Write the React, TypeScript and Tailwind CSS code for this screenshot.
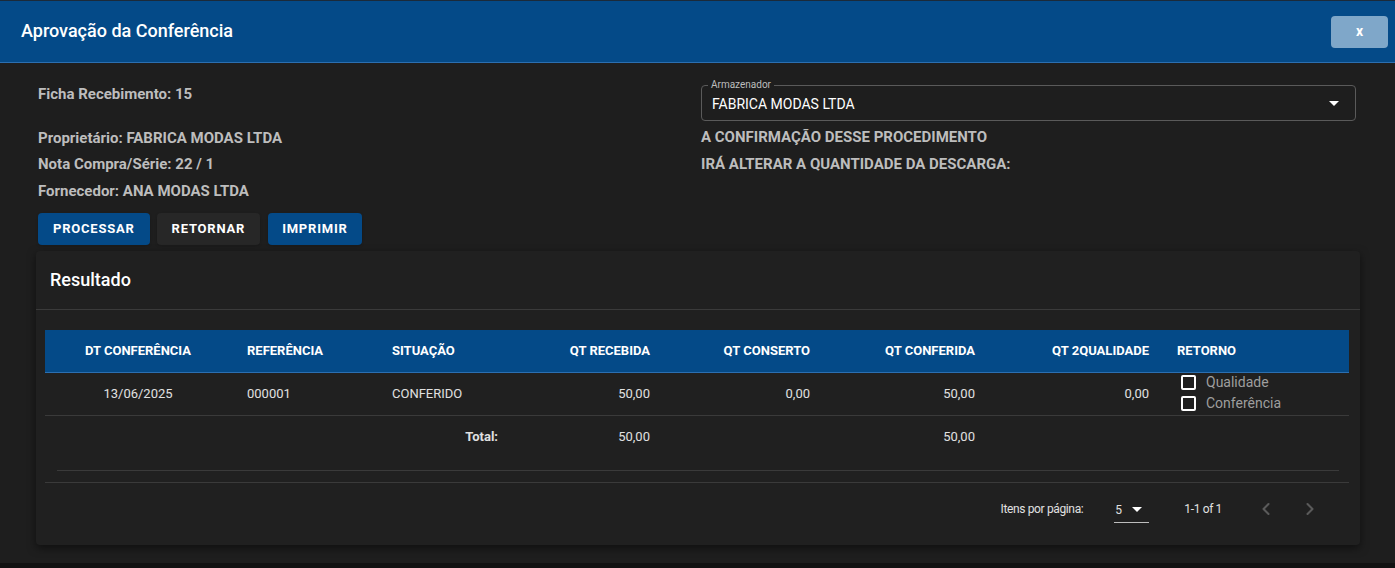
import { ChevronLeft, ChevronRight } from 'lucide-react';

const font = { fontFamily: 'Roboto, "Noto Sans", sans-serif' };

function Caret() {
    return (
        <svg width="10" height="5" viewBox="0 0 10 5" className="fill-white">
            <path d="M0 0 L10 0 L5 5 Z" />
        </svg>
    );
}

function Check({ label }: { label: string }) {
    return (
        <div className="flex items-center h-[21px]">
            <span className="w-[15px] h-[15px] border-2 border-white rounded-[2px] ml-[4px]" />
            <span className="ml-[10px] text-[14px] text-[#9e9e9e]">{label}</span>
        </div>
    );
}

export default function App() {
    return (
        <div className="w-[1395px] h-[568px] bg-[#121212] overflow-hidden" style={font}>
            <div className="h-[1px] bg-[#1b2a3a]" />
            <div className="h-[562px] bg-[#1e1e1e] flex flex-col">
                {/* Header */}
                <div className="h-[62px] bg-[#044a88] border-b border-[#2c6fb0] flex items-center justify-between pl-[21px] pr-[7px] shrink-0">
                    <h1 className="text-white text-[18px] font-medium mb-[2px]">Aprovação da Conferência</h1>
                    <button className="w-[57px] h-[32px] rounded bg-[#7fa7c9] text-white font-bold text-[14px]">x</button>
                </div>

                {/* Info */}
                <div className="flex px-[38px] pt-[21px]">
                    <div className="w-[663px] text-[15px] font-bold text-[#bdbdbd]">
                        <div className="h-[20px] leading-[20px]">Ficha Recebimento: 15</div>
                        <div className="h-[26px] mt-[21px] leading-[26px]">Proprietário: FABRICA MODAS LTDA</div>
                        <div className="h-[27px] leading-[27px]">Nota Compra/Série: 22 / 1</div>
                        <div className="h-[26px] leading-[26px]">Fornecedor: ANA MODAS LTDA</div>
                        <div className="flex mt-[9px]">
                            <button className="h-[32px] px-[15px] rounded bg-[#044a88] text-white text-[13px] font-bold tracking-[0.06em] shadow">PROCESSAR</button>
                            <button className="h-[32px] px-[15px] ml-[7px] rounded bg-[#272727] text-white text-[13px] font-bold tracking-[0.06em] shadow">RETORNAR</button>
                            <button className="h-[32px] px-[14px] ml-[8px] rounded bg-[#044a88] text-white text-[13px] font-bold tracking-[0.06em] shadow">IMPRIMIR</button>
                        </div>
                    </div>
                    <div className="flex-1 pr-[1px]">
                        <div className="relative h-[36px] mt-[1px] border border-[#5a5a5a] rounded flex items-center justify-between pl-[10px] pr-[16px]">
                            <span className="absolute -top-[6px] left-[6px] px-[3px] bg-[#1e1e1e] text-[10px] leading-[10px] text-[#bdbdbd]">Armazenador</span>
                            <span className="text-white text-[14px] mt-[2px]">FABRICA MODAS LTDA</span>
                            <Caret />
                        </div>
                        <div className="text-[15px] font-bold text-[#bdbdbd]">
                            <div className="h-[32px] leading-[32px]">A CONFIRMAÇÃO DESSE PROCEDIMENTO</div>
                            <div className="h-[22px] leading-[22px]">IRÁ ALTERAR A QUANTIDADE DA DESCARGA:</div>
                        </div>
                    </div>
                </div>

                {/* Result card */}
                <div className="ml-[36px] w-[1324px] mt-[6px] h-[294px] bg-[#202020] rounded shadow-[0_3px_8px_rgba(0,0,0,0.5)] flex flex-col">
                    <div className="h-[59px] border-b border-[#3a3a3a] flex items-center pl-[14px]">
                        <h2 className="text-white text-[18px] font-medium mb-[2px]">Resultado</h2>
                    </div>
                    <div className="px-[9px] pt-[20px]">
                        <table className="w-[1304px] table-fixed border-collapse text-[13px]">
                            <colgroup>
                                <col className="w-[186px]" />
                                <col className="w-[145px]" />
                                <col className="w-[138px]" />
                                <col className="w-[152px]" />
                                <col className="w-[160px]" />
                                <col className="w-[165px]" />
                                <col className="w-[174px]" />
                                <col className="w-[184px]" />
                            </colgroup>
                            <thead>
                                <tr className="h-[42px] bg-[#044a88] text-white font-bold text-[13px] border-b border-[#2c6fb0]">
                                    <th className="text-center px-[16px]">DT CONFERÊNCIA</th>
                                    <th className="text-left px-[16px]">REFERÊNCIA</th>
                                    <th className="text-left px-[16px]">SITUAÇÃO</th>
                                    <th className="text-right px-[16px]">QT RECEBIDA</th>
                                    <th className="text-right px-[16px]">QT CONSERTO</th>
                                    <th className="text-right px-[16px]">QT CONFERIDA</th>
                                    <th className="text-right px-[16px]">QT 2QUALIDADE</th>
                                    <th className="text-left px-[12px]">RETORNO</th>
                                </tr>
                            </thead>
                            <tbody className="text-[#e0e0e0]">
                                <tr className="h-[43px] border-b border-[#3a3a3a]">
                                    <td className="text-center px-[16px]">13/06/2025</td>
                                    <td className="text-left px-[16px]">000001</td>
                                    <td className="text-left px-[16px]">CONFERIDO</td>
                                    <td className="text-right px-[16px]">50,00</td>
                                    <td className="text-right px-[16px]">0,00</td>
                                    <td className="text-right px-[16px]">50,00</td>
                                    <td className="text-right px-[16px]">0,00</td>
                                    <td className="px-[12px] py-0">
                                        <div className="-mt-[2px]">
                                            <Check label="Qualidade" />
                                            <Check label="Conferência" />
                                        </div>
                                    </td>
                                </tr>
                                <tr className="h-[43px]">
                                    <td />
                                    <td />
                                    <td className="text-right px-[16px] font-bold">Total:</td>
                                    <td className="text-right px-[16px]">50,00</td>
                                    <td />
                                    <td className="text-right px-[16px]">50,00</td>
                                    <td />
                                    <td />
                                </tr>
                            </tbody>
                        </table>
                        <div className="mx-[12px] mt-[12px] border-b border-[#3a3a3a]" />
                        <div className="mt-[11px] mr-[2px] border-b border-[#3a3a3a]" />
                        <div className="h-[52px] flex items-center justify-end text-[12px] text-[#e0e0e0] pr-[31px]">
                            <span className="tracking-[-0.03em]">Itens por página:</span>
                            <div className="ml-[31px] w-[35px] h-[28px] border-b border-[#bdbdbd] flex items-center justify-between pt-[2px]">
                                <span className="ml-[1px]">5</span>
                                <span className="mr-[7px]"><Caret /></span>
                            </div>
                            <span className="ml-[35px] tracking-[-0.03em]">1-1 of 1</span>
                            <ChevronLeft className="ml-[34px] w-[20px] h-[20px] text-[#5a5a5a]" strokeWidth={2.5} />
                            <ChevronRight className="ml-[24px] w-[20px] h-[20px] text-[#5a5a5a]" strokeWidth={2.5} />
                        </div>
                    </div>
                </div>
            </div>
        </div>
    );
}
